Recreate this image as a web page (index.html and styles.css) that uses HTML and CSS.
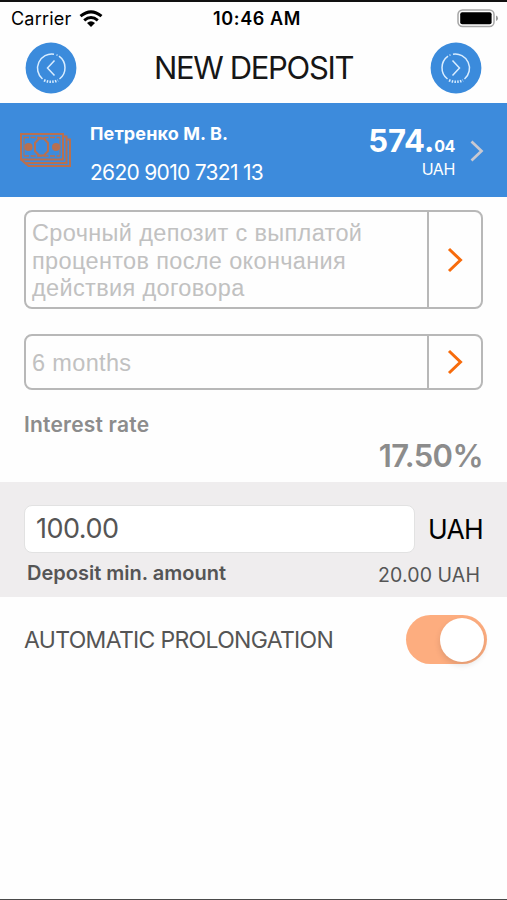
FILE: index.html
```html
<!DOCTYPE html>
<html lang="en">
<head>
<meta charset="utf-8">
<title>New deposit</title>
<link rel="stylesheet" href="styles.css">
</head>
<body>
<div class="screen">
  <div class="status">
    <div class="carrier"><span class="carrier-name">Carrier</span>
      <svg width="24" height="18" viewBox="0 0 24 18" fill="none" stroke="#000" stroke-width="3"><path d="M1.500 6.200Q12-2.500 22.500 6.200"/><path d="M5.200 10.300Q12 4.600 18.800 10.300"/><path d="M12 17L8 12.900Q12 9.800 16 12.900Z" fill="#000" stroke="none"/></svg>
    </div>
    <span class="clock">10:46 AM</span>
    <svg class="battery" width="42" height="19" viewBox="0 0 42 19"><rect x="1" y="1" width="36" height="16.500" rx="4.500" fill="none" stroke="#a6a6a6" stroke-width="1.500"/><rect x="3.200" y="3.300" width="31.400" height="12" rx="2" fill="#000"/><path d="M39 6.500Q41 7 41 9.300Q41 11.500 39 12Z" fill="#999"/></svg>
  </div>
  <header class="nav">
    <svg width="52" height="52" viewBox="0 0 52 52" fill="none" stroke="#d9edff"><circle cx="26" cy="26" r="25.400" fill="#3b8bdc" stroke="none"/><path d="M17.500 37A14.200 14.200 0 0 1 29 12.200M31.500 12.900L32.500 13.300M34 14.200A14.200 14.200 0 0 1 34.500 37" stroke-width="1.500"/><path d="M19 38.300Q26 41.300 33 38.300" stroke-width="2.600" stroke-dasharray="1.500 1.300"/><path d="M29.500 18.500L22.500 26L29.500 33.500" stroke-width="1.500"/></svg>
    <h1 class="title">NEW DEPOSIT</h1>
    <svg width="52" height="52" viewBox="0 0 52 52" fill="none" stroke="#d9edff"><circle cx="26" cy="26" r="25.400" fill="#3b8bdc" stroke="none"/><path d="M34.500 37A14.200 14.200 0 0 0 23 12.200M20.500 12.900L19.500 13.300M18 14.200A14.200 14.200 0 0 0 17.500 37" stroke-width="1.500"/><path d="M19 38.300Q26 41.300 33 38.300" stroke-width="2.600" stroke-dasharray="1.500 1.300"/><path d="M22.500 18.500L29.500 26L22.500 33.500" stroke-width="1.500"/></svg>
  </header>
  <section class="account">
    <svg width="52" height="36" viewBox="0 0 52 36" fill="none" stroke="#b87050" stroke-width="2"><path d="M2 2H44V27.500H2Z"/><path d="M44 4.500H47.500V31H6L2 27.500M47.500 7.500H51V34H9.500L4 29"/><path d="M5 5.500H41M5 24H41" stroke-width="1.600" stroke-dasharray="5 1.500"/><path d="M5 5V24M41 5V24" stroke-width="1"/><path d="M20 6.500H25L29 11V19L25 23.500H20L16 19V11Z"/><circle cx="9.500" cy="15" r="3" fill="#b87050"/><circle cx="37" cy="15" r="3" fill="#b87050"/></svg>
    <div class="owner"><span class="name">Петренко М. В.</span><span class="number">2620 9010 7321 13</span></div>
    <div class="balance"><div class="sum"><span class="whole">574.</span><span class="cents">04</span></div><span class="cur">UAH</span></div>
    <svg class="go" width="14" height="22" viewBox="0 0 14 22" fill="none" stroke="#c9c9d1" stroke-width="2.700"><path d="M1.500 1.500L11.500 11L1.500 20.500"/></svg>
  </section>
  <main class="form">
    <div class="select tall"><div class="value">Срочный депозит с выплатой<br>процентов после окончания<br>действия договора</div><div class="open"><svg width="16" height="26" viewBox="0 0 16 26" fill="none" stroke="#f76b0c" stroke-width="3"><path d="M2 2L13.500 13L2 24"/></svg></div></div>
    <div class="select short"><div class="value">6 months</div><div class="open"><svg width="16" height="26" viewBox="0 0 16 26" fill="none" stroke="#f76b0c" stroke-width="3"><path d="M2 2L13.500 13L2 24"/></svg></div></div>
    <div class="rate"><span class="rate-label">Interest rate</span><span class="rate-value">17.50%</span></div>
  </main>
  <section class="amount">
    <div class="entry"><div class="box">100.00</div><span class="unit">UAH</span></div>
    <div class="minimum"><span class="min-label">Deposit min. amount</span><span class="min-value">20.00 UAH</span></div>
  </section>
  <section class="auto"><span class="auto-label">AUTOMATIC PROLONGATION</span><div class="switch"><div class="knob"></div></div></section>
</div>
</body>
</html>
```
FILE: styles.css
```css
* { box-sizing: border-box; }
body { margin: 0; background: #fefefe; font-family: Inter, "Liberation Sans", sans-serif; }
.screen { width: 507px; height: 900px; overflow: hidden; border-top: 2px solid #111; border-bottom: 1px solid #4a4a4a; white-space: nowrap; }
.status { height: 36px; display: grid; grid-template-columns: 1fr auto 1fr; align-items: center; padding: 0 8px 4px 11px; font-size: 18px; line-height: 32px; }
.carrier { display: flex; align-items: center; gap: 8px; letter-spacing: 0.2px; }
.carrier-name, .clock { padding-top: 1px; }
.clock { font-weight: 600; letter-spacing: 0.6px; margin-left: 4px; }
.battery { justify-self: end; }
.nav { height: 65px; display: flex; justify-content: space-between; align-items: center; padding: 0 25px 6px; }
.title { margin: 0; font-size: 31px; font-weight: 400; letter-spacing: -1.35px; color: #161616; }
.account { height: 94px; background: #3d8bdc; color: #fff; display: flex; align-items: center; padding: 0 23px 0 19px; }
.owner { display: flex; flex-direction: column; margin-left: 19px; padding-top: 6px; line-height: 24px; gap: 15px; }
.name { font-size: 18px; font-weight: 700; letter-spacing: 0.12px; }
.number { font-size: 21px; letter-spacing: -0.7px; }
.balance { margin-left: auto; display: flex; flex-direction: column; align-items: flex-end; }
.whole { font-size: 31px; font-weight: 700; letter-spacing: -0.1px; }
.cents { font-size: 16px; font-weight: 700; letter-spacing: -0.4px; }
.cur { font-size: 16px; letter-spacing: -0.4px; }
.go { margin: 2px 0 0 15px; }
.form { height: 285px; padding: 13px 24px 0; }
.select { display: flex; border: 2px solid #b8b8b8; border-radius: 8px; color: #c1c1c1; font: 23.5px/27.5px "Liberation Sans", sans-serif; letter-spacing: 0.35px; }
.tall { height: 99px; }
.short { height: 56px; margin-top: 25px; }
.value { flex: 1; padding: 8px 6px; }
.short .value { padding-top: 14px; }
.open { width: 54px; border-left: 2px solid #b8b8b8; display: grid; place-items: center; }
.rate { display: flex; flex-direction: column; padding-top: 22px; color: #8c8c8c; font-weight: 600; }
.rate-label { font-size: 21px; line-height: 26px; letter-spacing: 0.2px; align-self: flex-start; }
.rate-value { font-size: 31px; line-height: 35px; letter-spacing: -0.6px; align-self: flex-end; }
.amount { height: 115px; background: #efedee; padding: 23px 24px 0; }
.entry { display: flex; align-items: center; justify-content: space-between; }
.box { width: 391px; height: 48px; border: 1px solid #e2e2e2; border-radius: 8px; background: #fff; padding-left: 11px; font-size: 27px; line-height: 46px; letter-spacing: -0.5px; color: #555; }
.unit { font-size: 26.5px; letter-spacing: -0.7px; }
.minimum { display: flex; justify-content: space-between; padding: 8px 3px; color: #555; line-height: 25px; }
.min-label { font-size: 20px; font-weight: 600; }
.min-value { font-size: 19.5px; letter-spacing: 0.1px; padding-top: 2px; }
.auto { height: 86px; display: flex; justify-content: space-between; align-items: center; padding: 0 20px 1px 24px; }
.auto-label { font-size: 23px; letter-spacing: -0.68px; color: #555; }
.switch { width: 81px; height: 49px; border-radius: 25px; background: #fdad7f; padding: 3px; }
.knob { width: 44px; height: 44px; border-radius: 50%; background: #fff; margin-left: auto; box-shadow: 0 3px 6px #0000001f; }
```
